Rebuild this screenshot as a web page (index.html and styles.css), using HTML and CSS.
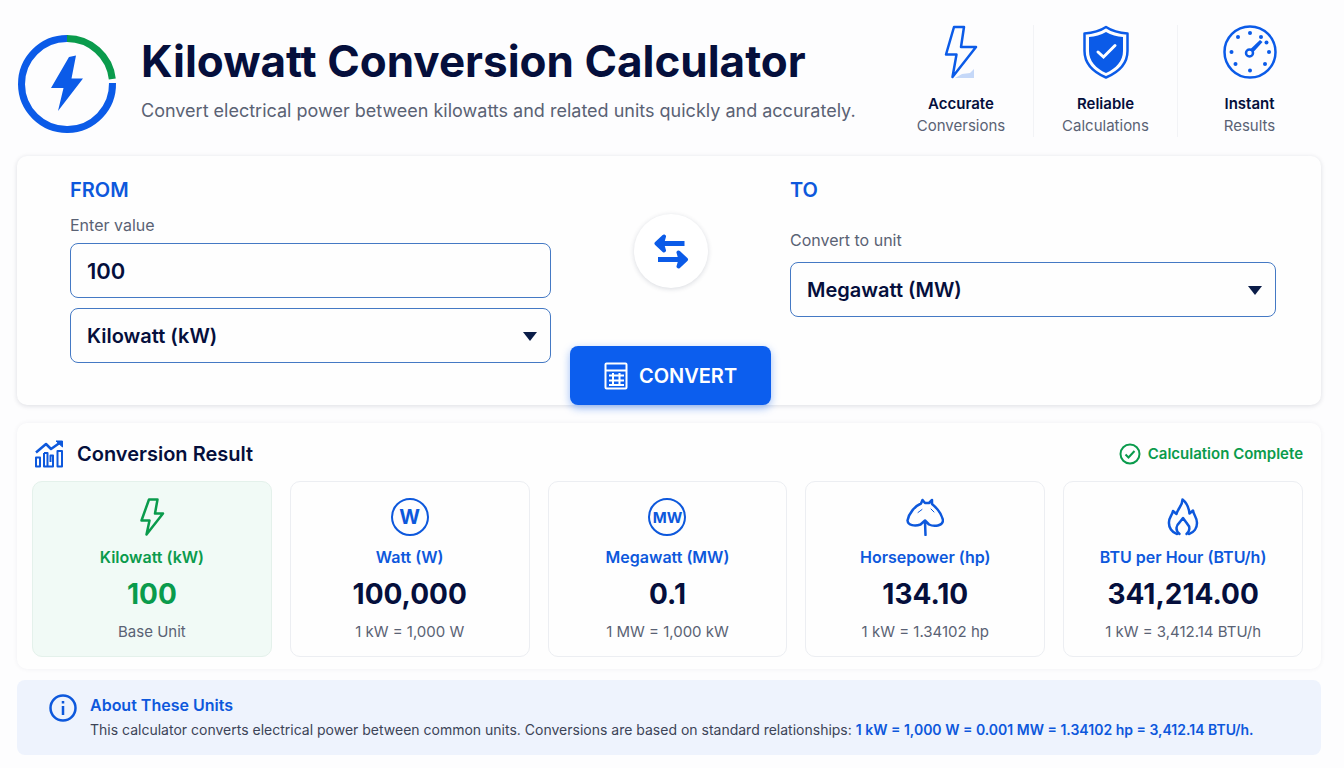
FILE: index.html
```html
<!DOCTYPE html>
<html lang="en">
<head>
<meta charset="utf-8">
<meta name="viewport" content="width=device-width, initial-scale=1">
<title>Kilowatt Conversion Calculator</title>
<link rel="stylesheet" href="styles.css">
</head>
<body>
<div class="page">
  <header class="header">
    <svg class="logo" viewBox="0 0 100 100" aria-hidden="true">
      <path class="logo-ring" d="M50 4.500A45.500 45.500 0 1 0 95.500 49"/>
      <path class="logo-arc" d="M50 4.500A45.500 45.500 0 0 1 95.300 45"/>
      <path class="logo-bolt" d="M52 23 59 21.500 54.500 44.500H66L41 77 46.500 54H34z"/>
    </svg>
    <div class="heading">
      <h1 class="title">Kilowatt Conversion Calculator</h1>
      <p class="subtitle">Convert electrical power between kilowatts and related units quickly and accurately.</p>
    </div>
    <ul class="features">
      <li class="feature">
        <svg class="feature-icon" viewBox="0 0 54 54" aria-hidden="true">
          <path class="bolt-shade" d="M21 53 28 49 36 48 40 44V53z"/>
          <path class="line" d="M20 2H30L27 22H42L18.500 52 22.500 29.500H12z"/>
        </svg>
        <strong class="feature-name">Accurate</strong>
        <span class="feature-note">Conversions</span>
      </li>
      <li class="feature">
        <svg class="feature-icon" viewBox="0 0 54 54" aria-hidden="true">
          <path class="line" d="M27 2C33 6 41 8 48.500 8.500V26C48.500 38 40 47 27 52.500 14 47 5.500 38 5.500 26V8.500C13 8 21 6 27 2z"/>
          <path class="solid" d="M27 7C32 10 38 11.500 44 12V26C44 36 37 43.500 27 48 17 43.500 10 36 10 26V12C16 11.500 22 10 27 7z"/>
          <path class="shield-check" d="M19 27 24.500 32 36 20.500"/>
        </svg>
        <strong class="feature-name">Reliable</strong>
        <span class="feature-note">Calculations</span>
      </li>
      <li class="feature">
        <svg class="feature-icon" viewBox="0 0 54 54" aria-hidden="true">
          <circle class="line" cx="27" cy="27" r="25.500"/>
          <circle class="line" cx="26.500" cy="28" r="3.500"/>
          <path class="solid" d="M27.500 24 37 15 39.500 17 30.500 27z"/>
          <g class="solid">
            <circle cx="27" cy="8" r="2"/><circle cx="15" cy="12" r="2"/><circle cx="38" cy="12" r="2"/>
            <circle cx="43.500" cy="17.500" r="2"/><circle cx="8.500" cy="27" r="2"/><circle cx="46" cy="27" r="2"/>
            <circle cx="12.500" cy="39" r="2"/><circle cx="27" cy="45.500" r="2"/><circle cx="42" cy="39" r="2"/>
          </g>
        </svg>
        <strong class="feature-name">Instant</strong>
        <span class="feature-note">Results</span>
      </li>
    </ul>
  </header>

  <main class="main">
    <form class="converter">
      <section class="side">
        <h2 class="side-title">FROM</h2>
        <label class="label" for="value">Enter value</label>
        <input class="control control-value" id="value" type="text" inputmode="decimal" value="100">
        <div class="select">
          <select class="control" id="from-unit" aria-label="Unit to convert from">
            <option>Kilowatt (kW)</option><option>Watt (W)</option><option>Megawatt (MW)</option>
          </select>
        </div>
      </section>
      <div class="actions">
        <button class="swap" type="button" aria-label="Swap units">
          <svg class="swap-icon" viewBox="0 0 36 36" aria-hidden="true">
            <path class="swap-line" d="M7 10.500H31.500M5 26.500H29"/>
            <path class="swap-head" d="M11 3.500 3.500 10.500 11 17.500 9 10.500zM25.500 19.500 33 26.500 25.500 33.500 27.500 26.500z"/>
          </svg>
        </button>
        <button class="convert" type="button">
          <svg class="convert-icon" viewBox="0 0 24 28" aria-hidden="true">
            <rect x="1.500" y="1.500" width="21" height="25" rx="1"/>
            <path d="M2 8.500H22M5 13.500H20M5 18.500H20M9 11V24M15.500 11V24M5 23H20"/>
          </svg>
          CONVERT
        </button>
      </div>
      <section class="side side-to">
        <h2 class="side-title">TO</h2>
        <label class="label" for="to-unit">Convert to unit</label>
        <div class="select">
          <select class="control" id="to-unit">
            <option>Megawatt (MW)</option><option>Watt (W)</option><option>Kilowatt (kW)</option>
          </select>
        </div>
      </section>
    </form>

    <section class="results">
      <div class="results-head">
        <svg class="chart-icon" viewBox="0 0 30 28" aria-hidden="true">
          <path class="chart-line" d="M2 12.500 12 4 17 9 25.500 3"/>
          <path class="chart-tip" d="M22 1H28.500V7z"/>
          <path class="chart-bars" d="M2 17.500H6V26.500H2zM10 13H13.500V26.500H19V15.500H16.500V22M10 13V26.500H14M23.500 11H28V26.500H23.500z"/>
        </svg>
        <h2 class="results-title">Conversion Result</h2>
        <p class="status">
          <svg class="status-icon" viewBox="0 0 22 22" aria-hidden="true"><circle cx="11" cy="11" r="9.500"/><path d="M6.500 11.500 9.500 14.500 15.500 8"/></svg>
          Calculation Complete
        </p>
      </div>
      <ul class="cards">
        <li class="card card-base">
          <svg class="card-icon" viewBox="0 0 38 38" aria-hidden="true"><path class="line" d="M16 1.500H24.500L22 15.500H30L13.500 36.500 16.500 22.500H8.500z"/></svg>
          <h3 class="card-title">Kilowatt (kW)</h3>
          <p class="card-value">100</p>
          <p class="card-note">Base Unit</p>
        </li>
        <li class="card">
          <span class="card-icon badge badge-w" aria-hidden="true">W</span>
          <h3 class="card-title">Watt (W)</h3>
          <p class="card-value">100,000</p>
          <p class="card-note">1 kW = 1,000 W</p>
        </li>
        <li class="card">
          <span class="card-icon badge badge-mw" aria-hidden="true">MW</span>
          <h3 class="card-title">Megawatt (MW)</h3>
          <p class="card-value">0.1</p>
          <p class="card-note">1 MW = 1,000 kW</p>
        </li>
        <li class="card">
          <svg class="card-icon" viewBox="0 0 38 38" aria-hidden="true">
            <path class="line" d="M16.500 2 19 5H23L26 2 26 6C31 10 35.500 16 37 22 37 28 28 29 23 26.500L19 22.500 14.500 26.500C9 28.500 2 27.500 1.500 22.500 3 15 9 8 15 5.500L16.500 2M19 23.500 19.500 37"/>
            <path class="line fine" d="M12 14.500 16 11.500M25 11 28 14"/>
          </svg>
          <h3 class="card-title">Horsepower (hp)</h3>
          <p class="card-value">134.10</p>
          <p class="card-note">1 kW = 1.34102 hp</p>
        </li>
        <li class="card">
          <svg class="card-icon" viewBox="0 0 38 38" aria-hidden="true">
            <path class="line" d="M13 36C8 34.500 4.500 29.500 5 24 5 19.500 8 17.500 9 13L12.500 16C14 10 18.500 8 18.500 1.500 23 5 25 11 25.500 15.500L29 12.500C29.500 17 33 19 33 25 33 30 30 34.500 25 36"/>
            <path class="line" d="M15.500 36C11 32 12 27.500 15.500 24.500L19 20 23 25.500C26.500 29 26 33 22.500 36"/>
          </svg>
          <h3 class="card-title">BTU per Hour (BTU/h)</h3>
          <p class="card-value">341,214.00</p>
          <p class="card-note">1 kW = 3,412.14 BTU/h</p>
        </li>
      </ul>
    </section>

    <aside class="about">
      <svg class="about-icon" viewBox="0 0 28 28" aria-hidden="true"><circle class="line" cx="14" cy="14" r="12.500"/><path class="info-mark" d="M14 12V21M14 7V9.500"/></svg>
      <div class="about-body">
        <h2 class="about-title">About These Units</h2>
        <p class="about-text">This calculator converts electrical power between common units. Conversions are based on standard relationships: <strong class="about-formula">1 kW = 1,000 W = 0.001 MW = 1.34102 hp = 3,412.14 BTU/h.</strong></p>
      </div>
    </aside>
  </main>
</div>
</body>
</html>
```
FILE: styles.css
```css
:root {
  --blue: #0b5be8;
  --blue-text: #0d58dc;
  --navy: #050f3c;
  --gray: #5a6274;
  --green: #0a9b4c;
}

* { box-sizing: border-box; }

body {
  margin: 0;
  background: #fdfdfe;
  color: var(--navy);
  font-family: Inter, "Liberation Sans", sans-serif;
}

h1, h2, h3, p, ul { margin: 0; padding: 0; }
ul { list-style: none; }
svg { display: block; flex: none; }

.line { fill: none; stroke: currentColor; stroke-width: 2.5; stroke-linejoin: round; stroke-linecap: round; }
.fine { stroke-width: 1; }
.solid { fill: currentColor; }

.page { padding: 0 23px 12px 17px; }

.header {
  display: flex;
  align-items: flex-start;
  padding: 25px 0 19px;
}
.logo { width: 100px; height: 100px; margin-top: 9px; fill: none; }
.logo-ring { stroke: var(--blue); stroke-width: 7; }
.logo-arc { stroke: var(--green); stroke-width: 7; }
.logo-bolt { fill: var(--blue); }
.heading { flex: 1; margin-left: 24px; padding-top: 8px; }
.title { font-size: 44px; line-height: 56px; font-weight: 700; }
.subtitle { margin-top: 8px; font-size: 18px; line-height: 28px; color: var(--gray); }

.features { display: flex; }
.feature {
  display: flex;
  flex-direction: column;
  align-items: center;
  width: 144px;
  line-height: 22px;
  font-size: 15px;
}
.feature + .feature { border-left: 1px solid #f2f3f6; }
.feature-icon { width: 54px; height: 54px; margin-bottom: 14px; color: var(--blue); }
.feature-name { font-weight: 600; }
.feature-note { color: var(--gray); }
.bolt-shade { fill: #c5d8f8; }
.shield-check { fill: none; stroke: #fff; stroke-width: 3; stroke-linecap: round; }

.converter {
  display: grid;
  grid-template-columns: minmax(0, 481fr) 201px minmax(0, 486fr);
  column-gap: 19px;
  padding: 0 45px 0 53px;
  border-radius: 10px;
  background: #fefefe;
  box-shadow: 0 1px 5px rgba(20, 30, 60, 0.14);
}
.side { display: flex; flex-direction: column; padding: 20px 0 42px; }
.side-title { font-size: 20px; line-height: 28px; font-weight: 600; color: var(--blue-text); }
.label { margin-top: 9px; font-size: 16px; line-height: 24px; color: var(--gray); }
.side-to .label { margin-top: 24px; }
.control {
  display: block;
  width: 100%;
  height: 55px;
  margin: 0;
  padding: 0 16px;
  border: 1px solid #4479c4;
  border-radius: 8px;
  background: #fefefe;
  color: var(--navy);
  font: 600 20px/28px Inter, "Liberation Sans", sans-serif;
  appearance: none;
}
.control-value { margin-top: 6px; font-size: 22px; }
.select { position: relative; margin-top: 10px; }
.select::after {
  content: "";
  position: absolute;
  top: 24px;
  right: 14px;
  width: 14px;
  height: 9px;
  background: #0a1c48;
  clip-path: polygon(0 0, 100% 0, 50% 100%);
  pointer-events: none;
}

.actions { display: flex; flex-direction: column; align-items: center; justify-content: space-between; padding-top: 58px; }
.swap {
  display: flex;
  align-items: center;
  justify-content: center;
  width: 74px;
  height: 74px;
  border: 0;
  border-radius: 50%;
  background: #fff;
  color: var(--blue);
  box-shadow: 0 1px 5px rgba(20, 30, 60, 0.16);
}
.swap-icon { width: 36px; height: 36px; }
.swap-line { fill: none; stroke: currentColor; stroke-width: 5; }
.swap-head { fill: currentColor; stroke: currentColor; stroke-width: 4; stroke-linejoin: round; }
.convert {
  display: flex;
  align-items: center;
  justify-content: center;
  gap: 11px;
  width: 100%;
  height: 59px;
  border: 0;
  border-radius: 8px;
  background: #0c5eee;
  color: #fff;
  font: 600 20px/28px Inter, "Liberation Sans", sans-serif;
  box-shadow: 0 3px 8px rgba(12, 94, 238, 0.4);
}
.convert-icon { width: 24px; height: 28px; fill: none; stroke: #fff; stroke-width: 2; }

.results {
  margin-top: 18px;
  padding: 16px 18px 12px 15px;
  border-radius: 10px;
  background: #fefefe;
  box-shadow: 0 0 5px rgba(20, 30, 60, 0.06);
}
.results-head { display: flex; align-items: center; padding: 0 0 12px 2px; }
.chart-icon { width: 30px; height: 28px; fill: none; stroke: var(--blue-text); stroke-width: 2; stroke-linejoin: round; }
.chart-line { stroke-width: 2.5; }
.chart-tip { fill: var(--blue-text); stroke-width: 1; }
.results-title { flex: 1; margin-left: 13px; font-size: 20px; line-height: 30px; font-weight: 600; }
.status { display: flex; align-items: center; gap: 7px; font-size: 15px; line-height: 24px; font-weight: 600; color: var(--green); }
.status-icon { width: 22px; height: 22px; fill: none; stroke: currentColor; stroke-width: 2; }

.cards { display: grid; grid-template-columns: repeat(5, minmax(0, 1fr)); gap: 18px; }
.card {
  display: flex;
  flex-direction: column;
  align-items: center;
  padding: 16px 0 12px;
  border: 1px solid #eceef2;
  border-radius: 10px;
  background: #fefefe;
}
.card-base { background: #f1faf6; border-color: #e4f1eb; }
.card-icon { width: 38px; height: 38px; color: var(--blue-text); }
.card-title { margin-top: 9px; font-size: 16px; line-height: 24px; font-weight: 600; color: var(--blue-text); }
.card-value { margin-top: 6px; font-size: 28px; line-height: 38px; font-weight: 700; }
.card-note { margin-top: 7px; font-size: 15px; line-height: 24px; color: var(--gray); }
.card-base .card-icon, .card-base .card-title, .card-base .card-value { color: var(--green); }
.badge { display: flex; align-items: center; justify-content: center; border: 2px solid currentColor; border-radius: 50%; font-weight: 700; }
.badge-w { font-size: 20px; }
.badge-mw { font-size: 15px; }

.about {
  display: flex;
  gap: 13px;
  margin-top: 11px;
  padding: 13px 20px 13px 32px;
  border-radius: 8px;
  background: #eef3fd;
}
.about-icon { width: 28px; height: 28px; margin-top: 1px; color: var(--blue-text); }
.info-mark { fill: none; stroke: currentColor; stroke-width: 2.5; }
.about-title { font-size: 16px; line-height: 24px; font-weight: 600; color: var(--blue-text); }
.about-text { margin-top: 1px; font-size: 14px; line-height: 24px; color: #3c4457; }
.about-formula { font-weight: 600; color: var(--blue-text); }
```
